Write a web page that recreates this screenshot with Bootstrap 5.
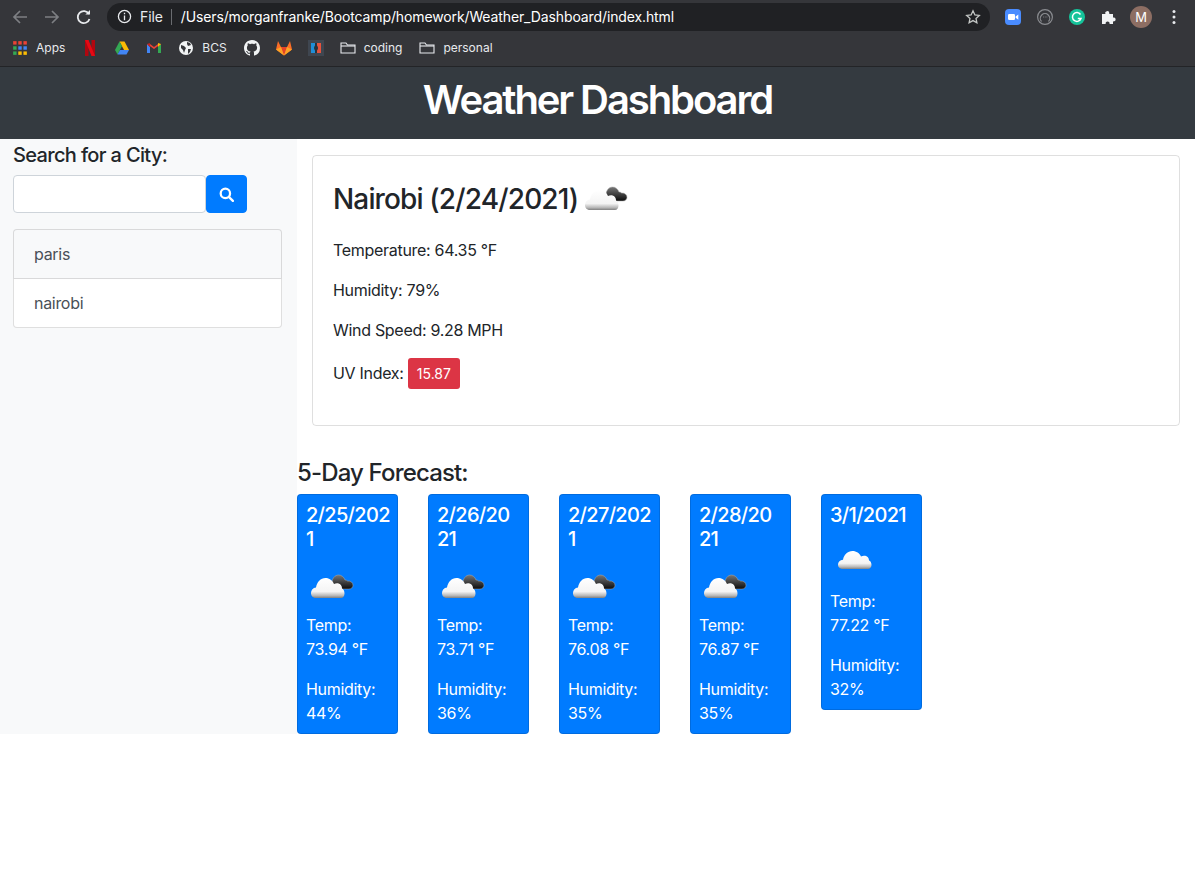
<!DOCTYPE html>
<html lang="en">
<head>
<meta charset="UTF-8">
<title>Weather Dashboard</title>
<link href="https://cdn.jsdelivr.net/npm/bootstrap@5.3.0/dist/css/bootstrap.min.css" rel="stylesheet">
<style>
body { font-family: Inter, "Liberation Sans", sans-serif; color: #212529; background: #fff; font-size: 16px; line-height: 24px; letter-spacing: -.3px; }
/* browser chrome */
.chrome-bar { background: #35363a; height: 67px; color: #e8eaed; border-bottom: 1px solid #232427; letter-spacing: 0; }
.tool-row { height: 33px; padding-left: 11px; }
.book-row { height: 29px; padding-left: 12px; font-size: 12px; color: #e8eaed; }
.nav-ico { width: 18px; height: 18px; flex: none; }
.nav-gap { margin-left: 14px; }
.omni { background: #202124; border-radius: 14px; height: 28px; width: 883px; margin-left: 14px; padding: 0 9px 0 10px; font-size: 14px; color: #fff; flex: none; letter-spacing: -.12px; }
.omni-sep { width: 1px; height: 16px; background: #6a6c70; margin: 0 9px 0 8px; }
.book-ico { width: 16px; height: 16px; flex: none; margin-left: 16px; }
.book-ico.after-text { margin-left: 17px; }
.book-ico.first-ico { margin-left: 0; }
.book-text { margin-left: 8px; }
.ext-ico { width: 18px; height: 18px; flex: none; margin-left: 14px; }
.avatar-m { width: 22px; height: 22px; margin-left: 12px; border-radius: 50%; background: #8d6e63; font-size: 13px; line-height: 22px; text-align: center; color: #fff; flex: none; }
/* page */
.page-head { background: #343a40; height: 72px; color: #fff; padding-bottom: 6px; }
.page-head h1 { font-size: 40px; line-height: 48px; font-weight: 600; margin: 0; letter-spacing: -2.1px; }
.side-col { width: 297px; flex: none; background: #f8f9fa; padding: 4px 15px 0 13px; height: 595px; }
.side-title { font-size: 20px; line-height: 24px; font-weight: 500; margin: 0 0 8px; letter-spacing: -.65px; }
.city-input { width: 193px; height: 38px; border: 1px solid #ced4da; border-radius: 4px; background: #fff; }
.go-btn { width: 41px; height: 38px; background: #007bff; border: 1px solid #007bff; border-radius: 4px; padding: 0; }
.city-list { margin-top: 16px; width: 269px; border-radius: 4px; }
.city-list .list-group-item { padding: 12px 20px; color: #495057; border-color: rgba(0,0,0,.125); }
.city-list .list-group-item:first-child { background: #f8f9fa; border-radius: 4px 4px 0 0; }
.city-list .list-group-item:last-child { border-radius: 0 0 4px 4px; }
.main-col { flex: 1; min-width: 0; }
.today-card { margin: 16px 15px 0; height: 271px; padding: 20px; border: 1px solid rgba(0,0,0,.125); border-radius: 4px; }
.today-card h3 { font-size: 28px; line-height: 46px; height: 54px; font-weight: 500; margin: 0 0 8px; letter-spacing: -.85px; gap: 2px; }
.today-card p { margin: 0 0 16px; }
.uv-btn { background: #dc3545; color: #fff; font-size: 14px; line-height: 21px; padding: 5px 9px; border-radius: 3px; display: inline-block; letter-spacing: 0; }
.fc-title { font-size: 24px; line-height: 29px; font-weight: 500; margin: 32px 0 7px; letter-spacing: -.85px; }
.fc-card { width: 101px; background: #007bff; color: #fff; border: 1px solid rgba(0,0,0,.125); border-radius: 4px; padding: 8px; margin-right: 30px; }
.fc-card h5 { font-size: 20px; line-height: 24px; font-weight: 500; margin: 0 0 8px; letter-spacing: -.7px; white-space: nowrap; }
.fc-card p { margin: 0 0 16px; }
.fc-card p:last-child { margin-bottom: 0; }
.w-ico { width: 50px; height: 50px; display: block; margin-bottom: 4px; }
.today-ico { width: 50px; height: 50px; flex: none; margin-top: -5px; }
</style>
</head>
<body>
<svg width="0" height="0" class="position-absolute">
  <defs>
    <linearGradient id="cw" x1="0" y1="0" x2="0" y2="1">
      <stop offset="0" stop-color="#ffffff"/><stop offset=".68" stop-color="#f4f4f4"/><stop offset=".88" stop-color="#b8b8b8"/><stop offset="1" stop-color="#808080"/>
    </linearGradient>
    <linearGradient id="cd" x1="0" y1="0" x2="0" y2="1">
      <stop offset="0" stop-color="#777"/><stop offset=".55" stop-color="#3c3c3c"/><stop offset="1" stop-color="#0c0c0c"/>
    </linearGradient>
    <symbol id="cloud-white" viewBox="0 0 50 50">
      <path transform="translate(3 -1) scale(1 .9)" d="M10 39C6.500 39 5 36.500 5 34c0-3 2-5.200 5-5.500C11 23 14.500 19 19.500 19c4 0 7 2.500 8.500 6 1-.5 2-.7 3-.7 3 0 5 2.200 5 5.200 1.500.5 2.500 2.500 2.500 5 0 2.500-1.500 4.500-3.500 4.500z" fill="url(#cw)"/>
    </symbol>
    <symbol id="cloud-both" viewBox="0 0 50 50">
      <path d="M26 24c0-4.500 3-8 6.500-8 3 0 5.500 2 6.500 5 1 0 2 .3 2.500 1 3-.3 5.500 1.500 5.500 4.200 0 2.300-1.800 3.800-4 3.800H30z" fill="url(#cd)" stroke="#a8a8a8" stroke-width=".5"/>
      <path d="M10 39C6.500 39 5 36.500 5 34c0-3 2-5.200 5-5.500C11 23 14.500 19 19.500 19c4 0 7 2.500 8.500 6 1-.5 2-.7 3-.7 3 0 5 2.200 5 5.200 1.500.5 2.500 2.500 2.500 5 0 2.500-1.500 4.500-3.500 4.500z" fill="url(#cw)"/>
    </symbol>
  </defs>
</svg>

<div class="chrome-bar">
  <div class="tool-row d-flex align-items-center">
    <svg class="nav-ico" viewBox="0 0 18 18" fill="none" stroke="#7d7f83" stroke-width="1.700"><path d="M16 9H3M9 3 3 9l6 6"/></svg>
    <svg class="nav-ico nav-gap" viewBox="0 0 18 18" fill="none" stroke="#7d7f83" stroke-width="1.700"><path d="M2 9h13M9 3l6 6-6 6"/></svg>
    <svg class="nav-ico nav-gap" viewBox="0 0 18 18" fill="none" stroke="#e8eaed" stroke-width="1.800"><path d="M14.500 11a6 6 0 1 1-.6-5"/><path d="M15 2v4.600h-4.600" fill="#e8eaed" stroke="none"/></svg>
    <div class="omni d-flex align-items-center">
      <svg width="15" height="15" viewBox="0 0 16 16" fill="none" stroke="#e8eaed" stroke-width="1.400"><circle cx="8" cy="8" r="6.500"/><path d="M8 7v5M8 4v1.600"/></svg>
      <span class="ms-2" style="color:#e8eaed">File</span>
      <span class="omni-sep"></span>
      <span>/Users/morganfranke/Bootcamp/homework/Weather_Dashboard/index.html</span>
      <svg class="ms-auto" width="16" height="16" viewBox="0 0 16 16" fill="none" stroke="#c4c7c5" stroke-width="1.300"><path d="m8 1.800 1.900 4.100 4.400.5-3.300 3 .9 4.400L8 11.600l-3.900 2.200.9-4.400-3.300-3 4.400-.5z"/></svg>
    </div>
    <svg class="ext-ico" viewBox="0 0 18 18"><rect x="1" y="1" width="16" height="16" rx="4" fill="#4a8cff"/><rect x="4" y="6" width="7" height="6" rx="1.200" fill="#fff"/><path d="m11.600 8.500 2.700-2v5.200l-2.700-2z" fill="#fff"/></svg>
    <svg class="ext-ico" viewBox="0 0 18 18" fill="none" stroke="#8a8c90" stroke-width="1.200"><circle cx="9" cy="9" r="7.400"/><path d="M5.500 13.500a4.700 4.700 0 1 1 7 0"/><path d="M7 9h.8M8.800 9h.8M10.500 9h.8" stroke-width=".9"/></svg>
    <svg class="ext-ico" viewBox="0 0 18 18" fill="none"><circle cx="9" cy="9" r="8" fill="#15c39a"/><path d="M12.500 6.500A4.400 4.400 0 1 0 13 10.500H9.800" stroke="#fff" stroke-width="1.500"/></svg>
    <svg class="ext-ico" viewBox="0 0 18 18" fill="#f1f3f4"><path d="M2 6h3.500a2 2 0 1 1 3.800-1V6H13v3.500a2 2 0 1 1 0 3.800V16H9.500a2 2 0 1 0-3.800 0H2z"/></svg>
    <div class="avatar-m">M</div>
    <svg class="ext-ico" style="margin-left:13px" viewBox="0 0 18 18" fill="#e8eaed"><circle cx="9" cy="3.500" r="1.500"/><circle cx="9" cy="9" r="1.500"/><circle cx="9" cy="14.500" r="1.500"/></svg>
  </div>
  <div class="book-row d-flex align-items-center">
    <svg class="book-ico first-ico" viewBox="0 0 14 14"><rect x="1" y="1" width="3" height="3" fill="#ea4335"/><rect x="5.500" y="1" width="3" height="3" fill="#ea4335"/><rect x="10" y="1" width="3" height="3" fill="#ea4335"/><rect x="1" y="5.500" width="3" height="3" fill="#34a853"/><rect x="5.500" y="5.500" width="3" height="3" fill="#4285f4"/><rect x="10" y="5.500" width="3" height="3" fill="#4285f4"/><rect x="1" y="10" width="3" height="3" fill="#34a853"/><rect x="5.500" y="10" width="3" height="3" fill="#fbbc04"/><rect x="10" y="10" width="3" height="3" fill="#fbbc04"/></svg>
    <span class="book-text">Apps</span>
    <svg class="book-ico after-text" viewBox="0 0 16 16"><path d="M3 0h3.500v16L3 16z" fill="#b1060f"/><path d="M9.500 0H13v16H9.500z" fill="#b1060f"/><path d="M3 0h3.500L13 16H9.500z" fill="#e50914"/></svg>
    <svg class="book-ico" viewBox="0 0 16 16"><path d="M5.500 1.500h5L15 10h-5z" fill="#fbbc04"/><path d="M5.500 1.500 1 10l2.500 4.500L8 6z" fill="#34a853"/><path d="M3.500 14.500h9L15 10H6z" fill="#4285f4"/></svg>
    <svg class="book-ico" viewBox="0 0 16 16"><path d="M1 4v9h3V7z" fill="#4285f4"/><path d="M12 7v6h3V4z" fill="#34a853"/><path d="m1 4 7 5 7-5-3 0-4 3-4-3z" fill="#ea4335"/><path d="m1 4 3 3V3z" fill="#c5221f"/><path d="m15 4-3 3V3z" fill="#fbbc04"/></svg>
    <svg class="book-ico" viewBox="0 0 16 16"><circle cx="8" cy="8" r="7" fill="#f1f3f4"/><path d="M3 5l3 1 2 2-1 2-1 3-1-3-2-2zM9 2l3 1 1 2-3 1-1-2zM10 9l3 0-1 3-2 2z" fill="#35363a"/></svg>
    <span class="book-text">BCS</span>
    <svg class="book-ico after-text" viewBox="0 0 16 16" fill="#f1f3f4"><path d="M8 0C3.580 0 0 3.580 0 8c0 3.540 2.290 6.530 5.470 7.590.4.070.55-.17.55-.38 0-.19-.01-.82-.01-1.490-2.010.37-2.530-.49-2.690-.94-.09-.23-.48-.94-.82-1.130-.28-.15-.68-.52-.01-.53.63-.01 1.080.58 1.230.82.720 1.210 1.870.870 2.330.660.070-.520.280-.870.510-1.070-1.780-.2-3.640-.890-3.640-3.950 0-.870.310-1.590.820-2.150-.08-.2-.36-1.020.08-2.120 0 0 .670-.210 2.200.820.640-.180 1.320-.270 2-.270s1.360.090 2 .270c1.530-1.040 2.200-.820 2.200-.820.440 1.100.160 1.920.080 2.120.510.560.820 1.270.820 2.150 0 3.070-1.870 3.750-3.650 3.950.290.250.540.730.540 1.480 0 1.070-.010 1.930-.010 2.200 0 .210.150.460.550.380A8.010 8.010 0 0 0 16 8c0-4.420-3.580-8-8-8z"/></svg>
    <svg class="book-ico" viewBox="0 0 16 16"><path d="m8 15.500-8-6L2 1l3 6h6l3-6 2 8.500z" fill="#fc6d26"/><path d="M8 15.500 5 7h6z" fill="#e24329"/><path d="m8 15.500-8-6L5 7zM8 15.500l8-6L11 7z" fill="#fca326"/></svg>
    <svg class="book-ico" viewBox="0 0 16 16"><rect x="0" y="0" width="16" height="16" fill="#3f4650"/><path d="M3 3h4v2.500L6 8l1 2.500V13H3z" fill="#1f8fd8"/><path d="M13 3H9v2.500L10 8l-1 2.500V13h4z" fill="#e5533d"/><path d="M7 3v2.500L6 8l1 2.500V13h2v-2.500L10 8 9 5.500V3z" fill="#26323c"/></svg>
    <svg class="book-ico" viewBox="0 0 16 16" fill="none" stroke="#e8eaed" stroke-width="1.100"><path d="M1 13V3h5l1.500 2H15v8z"/><path d="M1 6h14"/></svg>
    <span class="book-text">coding</span>
    <svg class="book-ico after-text" viewBox="0 0 16 16" fill="none" stroke="#e8eaed" stroke-width="1.100"><path d="M1 13V3h5l1.500 2H15v8z"/><path d="M1 6h14"/></svg>
    <span class="book-text">personal</span>
  </div>
</div>

<header class="page-head d-flex align-items-center justify-content-center">
  <h1>Weather Dashboard</h1>
</header>

<div class="d-flex">
  <aside class="side-col">
    <h5 class="side-title">Search for a City:</h5>
    <div class="d-flex">
      <input class="city-input" type="text" aria-label="City">
      <button class="go-btn d-flex align-items-center justify-content-center" type="button" aria-label="Search">
        <svg width="15" height="15" viewBox="0 0 16 16" fill="none" stroke="#fff" stroke-width="2.400"><circle cx="6.800" cy="6.800" r="5"/><path d="m10.500 10.500 4.300 4.300" stroke-linecap="round"/></svg>
      </button>
    </div>
    <ul class="list-group city-list">
      <li class="list-group-item">paris</li>
      <li class="list-group-item">nairobi</li>
    </ul>
  </aside>

  <main class="main-col">
    <section class="today-card">
      <h3 class="d-flex align-items-start"><span>Nairobi (2/24/2021)</span><svg class="today-ico"><use href="#cloud-both"/></svg></h3>
      <p>Temperature: 64.35 °F</p>
      <p>Humidity: 79%</p>
      <p>Wind Speed: 9.28 MPH</p>
      <p>UV Index: <span class="uv-btn">15.87</span></p>
    </section>

    <h4 class="fc-title">5-Day Forecast:</h4>
    <div id="forecast" class="d-flex align-items-start"></div>
  </main>
</div>

<script>
  var days = [
    { date: "2/25/202<br>1", icon: "cloud-both", temp: "73.94", hum: "44" },
    { date: "2/26/20<br>21", icon: "cloud-both", temp: "73.71", hum: "36" },
    { date: "2/27/202<br>1", icon: "cloud-both", temp: "76.08", hum: "35" },
    { date: "2/28/20<br>21", icon: "cloud-both", temp: "76.87", hum: "35" },
    { date: "3/1/2021", icon: "cloud-white", temp: "77.22", hum: "32" }
  ];
  document.getElementById("forecast").innerHTML = days.map(function (d) {
    return '<div class="fc-card"><h5>' + d.date + '</h5>' +
      '<svg class="w-ico"><use href="#' + d.icon + '"/></svg>' +
      '<p>Temp:<br>' + d.temp + ' °F</p><p>Humidity:<br>' + d.hum + '%</p></div>';
  }).join("");
</script>
<script src="https://cdn.jsdelivr.net/npm/bootstrap@5.3.0/dist/js/bootstrap.bundle.min.js"></script>
</body>
</html>
